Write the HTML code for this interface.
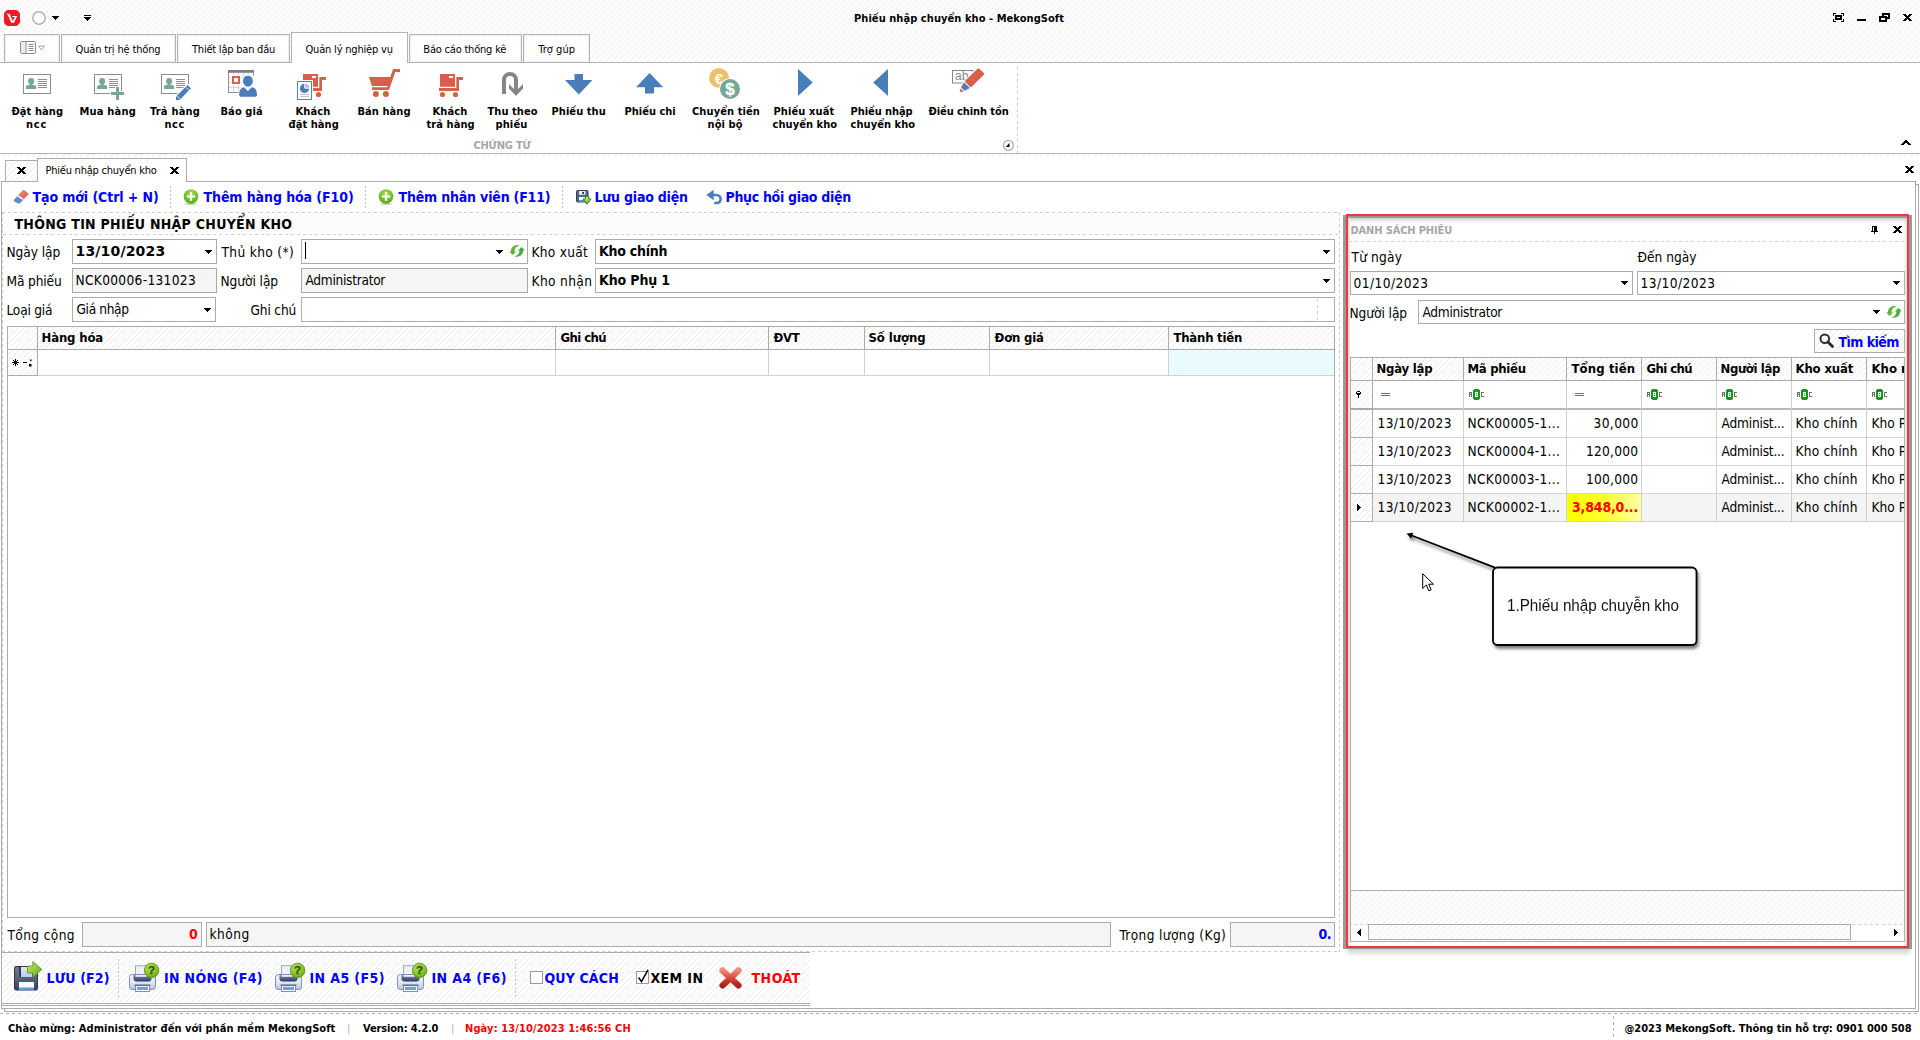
<!DOCTYPE html>
<html lang="vi"><head><meta charset="utf-8"><title>Phiếu nhập chuyển kho - MekongSoft</title>
<style>
html,body{margin:0;padding:0;background:#fff}
body{width:1920px;height:1040px;position:relative;overflow:hidden;font-family:"DejaVu Sans Condensed","Liberation Sans",sans-serif;font-size:13.6px;color:#000}
div,span,svg{position:absolute;box-sizing:border-box}
.h{background-color:#fff}
.t{white-space:nowrap;line-height:20px;height:20px}
.b{font-weight:700}
.f{border:1px solid #ababab;background:#fff}
.g{background:#f5f5f5}
.ln{background:#ababab}
.dh{height:0;border-top:1px dashed #d4d4d4}
.dv{width:0;border-left:1px dashed #d4d4d4}
.ar{width:0;height:0;border-left:4px solid transparent;border-right:4px solid transparent;border-top:4px solid #000}
</style></head>
<body>
<svg width="0" height="0" style="left:0;top:0"><defs><pattern id="hp" width="6" height="6" patternUnits="userSpaceOnUse"><path d="M4 0h1v1h-1zM3 1h1v1h-1zM2 2h1v1h-1zM1 3h1v1h-1zM0 4h1v1h-1zM5 5h1v1h-1z" fill="#ebebeb"/></pattern><pattern id="hq" width="6" height="6" patternUnits="userSpaceOnUse"><path d="M4 0h1v1h-1zM3 1h1v1h-1zM2 2h1v1h-1zM1 3h1v1h-1zM0 4h1v1h-1zM5 5h1v1h-1z" fill="#f5f5f5"/></pattern></defs></svg>
<div style="left:0px;top:0px;width:1920px;height:32px;background:#fff;"></div>
<svg style="left:0px;top:0px" width="1920" height="32" shape-rendering="crispEdges"><rect width="100%" height="100%" fill="url(#hp)"/></svg>
<div style="left:0px;top:32px;width:1920px;height:30px;background:#fff;"></div>
<svg style="left:0px;top:32px" width="1920" height="30" shape-rendering="crispEdges"><rect width="100%" height="100%" fill="url(#hp)"/></svg>
<svg style="left:4px;top:10px" width="16" height="16" viewBox="0 0 16 16"><path d="M4 0 H12 Q13 0 13.800 0.800 L15.200 2.200 Q16 3 16 4 V12 Q16 13 15.200 13.800 L13.800 15.200 Q13 16 12 16 H4 Q3 16 2.200 15.200 L0.800 13.800 Q0 13 0 12 V4 Q0 3 0.800 2.200 L2.200 0.800 Q3 0 4 0 Z" fill="#ed1c24"/><path d="M2.300 2.500 L4.400 4.600 L5.300 3.200 L8.700 11 L10.900 7 L8.200 6.900 L8.300 6 L13.200 6 L10 12.800 L7.300 12.800 L4.200 6 Z" fill="#fff"/></svg>
<svg style="left:31px;top:10px" width="16" height="16" viewBox="0 0 16 16"><circle cx="8" cy="8" r="6.200" fill="#fff" stroke="#b4b4b4" stroke-width="1.500"/></svg>
<svg style="left:52px;top:16px" width="7" height="4" shape-rendering="crispEdges"><path d="M0 0h7v1h-7zM1 1h5v1h-5zM2 2h3v1h-3zM3 3h1v1h-1z"/></svg>
<div style="left:84px;top:15px;width:7px;height:1px;background:#000"></div>
<svg style="left:84px;top:17px" width="7" height="4" shape-rendering="crispEdges"><path d="M0 0h7v1h-7zM1 1h5v1h-5zM2 2h3v1h-3zM3 3h1v1h-1z"/></svg>
<span class="t b" style="top:9px;left:854px;font-size:11px;letter-spacing:0.06px;">Phiếu nhập chuyển kho - MekongSoft</span>
<svg style="left:1833px;top:13px" width="11" height="9" shape-rendering="crispEdges"><path d="M0 0h3v1h-3zM8 0h3v1h-3zM0 1h1v1h-1zM10 1h1v1h-1zM0 2h1v1h-1zM2 2h7v1h-7zM10 2h1v1h-1zM2 3h7v1h-7zM2 4h2v1h-2zM7 4h2v1h-2zM2 5h7v1h-7zM0 6h1v1h-1zM2 6h7v1h-7zM10 6h1v1h-1zM0 7h1v1h-1zM10 7h1v1h-1zM0 8h3v1h-3zM8 8h3v1h-3z" fill="#000"/></svg>
<div style="left:1857px;top:19px;width:9px;height:2px;background:#000"></div>
<svg style="left:1879px;top:13px" width="11" height="9" shape-rendering="crispEdges"><path d="M3 0h8v1h-8zM3 1h8v1h-8zM3 2h2v1h-2zM9 2h2v1h-2zM0 3h8v1h-8zM9 3h2v1h-2zM0 4h11v1h-11zM0 5h2v1h-2zM6 5h5v1h-5zM0 6h2v1h-2zM6 6h2v1h-2zM0 7h8v1h-8zM0 8h8v1h-8z" fill="#000"/></svg>
<svg style="left:1903px;top:14px" width="9" height="7" shape-rendering="crispEdges"><path d="M0 0h3v1h-3zM6 0h3v1h-3zM1 1h3v1h-3zM5 1h3v1h-3zM2 2h5v1h-5zM3 3h3v1h-3zM2 4h5v1h-5zM1 5h3v1h-3zM5 5h3v1h-3zM0 6h3v1h-3zM6 6h3v1h-3z" fill="#000"/></svg>
<div style="left:4px;top:34px;width:56px;height:29px;background:#fff;border:1px solid #b4b4b4;box-shadow:inset 0 0 0 1px #f0f0f0"></div>
<div style="left:61px;top:34px;width:115px;height:29px;background:#fff;border:1px solid #b4b4b4;box-shadow:inset 0 0 0 1px #f0f0f0"></div>
<span class="t" style="top:40px;left:75.5px;font-size:11px;letter-spacing:-0.16px;">Quản trị hệ thống</span>
<div style="left:177px;top:34px;width:113px;height:29px;background:#fff;border:1px solid #b4b4b4;box-shadow:inset 0 0 0 1px #f0f0f0"></div>
<span class="t" style="top:40px;left:192px;font-size:11px;letter-spacing:-0.22px;">Thiết lập ban đầu</span>
<div style="left:409px;top:34px;width:113px;height:29px;background:#fff;border:1px solid #b4b4b4;box-shadow:inset 0 0 0 1px #f0f0f0"></div>
<span class="t" style="top:40px;left:423.3px;font-size:11px;letter-spacing:-0.2px;">Báo cáo thống kê</span>
<div style="left:523px;top:34px;width:67px;height:29px;background:#fff;border:1px solid #b4b4b4;box-shadow:inset 0 0 0 1px #f0f0f0"></div>
<span class="t" style="top:40px;left:538.3px;font-size:11px;letter-spacing:0.03px;">Trợ gúp</span>
<div style="left:291px;top:32px;width:117px;height:32px;background:#fff;border:1px solid #b4b4b4;border-bottom:none"></div>
<span class="t" style="top:40px;left:305.5px;font-size:11px;letter-spacing:-0.19px;">Quản lý nghiệp vụ</span>
<svg style="left:20px;top:41px" width="26" height="14" viewBox="0 0 26 14"><rect x="0.500" y="0.500" width="15" height="12" rx="1.500" fill="#fff" stroke="#8c8c8c"/><rect x="1" y="1" width="4.500" height="11" fill="#ececec"/><path d="M6 0.500 V12.500" stroke="#8c8c8c"/><path d="M8.500 3.500 h5 M8.500 5.500 h5 M8.500 7.500 h5 M8.500 9.500 h5" stroke="#8c8c8c" stroke-width="1"/><path d="M18.500 5 h6 l-3 4 z" fill="#fff" stroke="#9a9a9a" stroke-width="0.900"/></svg>
<div style="left:0px;top:62px;width:1920px;height:92px;background:#fff;border-top:1px solid #b4b4b4;border-bottom:1px solid #b4b4b4"></div>
<div style="left:292px;top:62px;width:115px;height:1px;background:#fff"></div>
<div style="left:0px;top:154px;width:1920px;height:3px;background:#fff;"></div>
<svg style="left:0px;top:154px" width="1920" height="3" shape-rendering="crispEdges"><rect width="100%" height="100%" fill="url(#hp)"/></svg>
<svg style="left:23px;top:74px" width="32" height="32" viewBox="0 0 32 32" ><g transform="translate(0,0)"><rect x="0.500" y="0.500" width="27" height="19" fill="#fff" stroke="#8c8c8c"/><ellipse cx="8.100" cy="7.200" rx="3" ry="3.300" fill="#76a797"/><path d="M3 15 v-2 c0 -1.300 0.800 -2 2.200 -2 h5.800 c1.400 0 2.200 0.700 2.200 2 v2 z" fill="#76a797"/><rect x="6.600" y="9.500" width="3" height="2" fill="#76a797"/><rect x="15" y="5" width="9" height="1" fill="#8f8f8f" shape-rendering="crispEdges"/><rect x="15" y="7" width="9" height="1" fill="#8f8f8f" shape-rendering="crispEdges"/><rect x="15" y="9" width="9" height="1" fill="#8f8f8f" shape-rendering="crispEdges"/><rect x="15" y="11" width="9" height="1" fill="#8f8f8f" shape-rendering="crispEdges"/><rect x="15" y="13" width="9" height="1" fill="#8f8f8f" shape-rendering="crispEdges"/></g></svg>
<span class="t b" style="top:102px;left:11.5px;font-size:11px;letter-spacing:0.07px;">Đặt hàng</span>
<span class="t b" style="top:115px;left:26px;font-size:11px;letter-spacing:0.75px;">ncc</span>
<svg style="left:94px;top:74px" width="32" height="32" viewBox="0 0 32 32" ><rect x="0.500" y="0.500" width="27" height="19" fill="#fff" stroke="#8c8c8c"/><ellipse cx="8.100" cy="7.200" rx="3" ry="3.300" fill="#76a797"/><path d="M3 15 v-2 c0 -1.300 0.800 -2 2.200 -2 h5.800 c1.400 0 2.200 0.700 2.200 2 v2 z" fill="#76a797"/><rect x="6.600" y="9.500" width="3" height="2" fill="#76a797"/><rect x="15" y="5" width="9" height="1" fill="#8f8f8f" shape-rendering="crispEdges"/><rect x="15" y="7" width="9" height="1" fill="#8f8f8f" shape-rendering="crispEdges"/><rect x="15" y="9" width="9" height="1" fill="#8f8f8f" shape-rendering="crispEdges"/><rect x="15" y="11" width="9" height="1" fill="#8f8f8f" shape-rendering="crispEdges"/><rect x="15" y="13" width="9" height="1" fill="#8f8f8f" shape-rendering="crispEdges"/><rect x="16" y="17" width="15" height="5" fill="#fff"/><rect x="21" y="12" width="5" height="15" fill="#fff"/><path d="M22 13 h3 v5 h5 v3 h-5 v5 h-3 v-5 h-5 v-3 h5 z" fill="#76a797" shape-rendering="crispEdges"/></svg>
<span class="t b" style="top:102px;left:79.5px;font-size:11px;letter-spacing:0.21px;">Mua hàng</span>
<svg style="left:161px;top:74px" width="32" height="32" viewBox="0 0 32 32" ><rect x="0.500" y="0.500" width="27" height="19" fill="#fff" stroke="#8c8c8c"/><ellipse cx="8.100" cy="7.200" rx="3" ry="3.300" fill="#76a797"/><path d="M3 15 v-2 c0 -1.300 0.800 -2 2.200 -2 h5.800 c1.400 0 2.200 0.700 2.200 2 v2 z" fill="#76a797"/><rect x="6.600" y="9.500" width="3" height="2" fill="#76a797"/><rect x="15" y="5" width="9" height="1" fill="#8f8f8f" shape-rendering="crispEdges"/><rect x="15" y="7" width="9" height="1" fill="#8f8f8f" shape-rendering="crispEdges"/><rect x="15" y="9" width="9" height="1" fill="#8f8f8f" shape-rendering="crispEdges"/><rect x="15" y="11" width="9" height="1" fill="#8f8f8f" shape-rendering="crispEdges"/><rect x="15" y="13" width="9" height="1" fill="#8f8f8f" shape-rendering="crispEdges"/><rect x="26.800" y="10.300" width="1.500" height="10" fill="#fff"/><rect x="17" y="18.800" width="11.300" height="1.500" fill="#fff"/><path d="M15 26 L15 22.500 L26.500 11 L30 14.200 L18.700 26 Z" fill="#fff" stroke="#fff" stroke-width="2.400" stroke-linejoin="round"/><path d="M15 26 L15 22.500 L26.500 11 L30 14.200 L18.700 26 Z" fill="#4a7ebb"/><path d="M24.500 13 L28 16.300" stroke="#fff" stroke-width="0.800"/><path d="M15.700 21.900 L19.200 25.300" stroke="#fff" stroke-width="0.800"/></svg>
<span class="t b" style="top:102px;left:150px;font-size:11px;letter-spacing:0.21px;">Trả hàng</span>
<span class="t b" style="top:115px;left:164.5px;font-size:11px;letter-spacing:0.5px;">ncc</span>
<svg style="left:228px;top:70px" width="32" height="32" viewBox="0 0 32 32" ><rect x="0.500" y="1.500" width="25" height="21" fill="#fff" stroke="#8f8f8f"/><rect x="0" y="0" width="26" height="2.800" fill="#7f7f7f"/><rect x="5" y="3" width="1" height="19" fill="#d6d6d6" shape-rendering="crispEdges"/><rect x="10" y="3" width="1" height="19" fill="#d6d6d6" shape-rendering="crispEdges"/><rect x="15" y="3" width="1" height="19" fill="#d6d6d6" shape-rendering="crispEdges"/><rect x="20" y="3" width="1" height="19" fill="#d6d6d6" shape-rendering="crispEdges"/><rect x="1" y="7" width="24" height="1" fill="#d6d6d6" shape-rendering="crispEdges"/><rect x="1" y="12" width="24" height="1" fill="#d6d6d6" shape-rendering="crispEdges"/><rect x="1" y="17" width="24" height="1" fill="#d6d6d6" shape-rendering="crispEdges"/><rect x="3" y="5" width="10" height="10" fill="#fff"/><rect x="5" y="7" width="6" height="6" fill="#fff" stroke="#d8604a" stroke-width="2"/><rect x="24.800" y="5.800" width="1.500" height="17.500" fill="#fff"/><rect x="11" y="21.800" width="15.300" height="1.500" fill="#fff"/><ellipse cx="19.900" cy="11.200" rx="4.900" ry="5.500" fill="#fff" stroke="#fff" stroke-width="2.400"/><path d="M11.200 25 C11.200 20 13 17.500 16 17.200 L19.900 21 L23.800 17.200 C27 17.500 29 20 29 25 C29 26.200 28.200 26.800 27 26.800 H13.200 C12 26.800 11.200 26.200 11.200 25 Z" fill="#fff" stroke="#fff" stroke-width="2.400"/><path d="M15 11 C15 7.500 17 5.700 19.900 5.700 S24.800 7.500 24.800 11 C24.800 14 22.500 16.700 19.900 16.700 S15 14 15 11 Z" fill="#4a7ebb"/><path d="M11.200 25 C11.200 20 13 17.500 16 17.200 L19.900 21 L23.800 17.200 C27 17.500 29 20 29 25 C29 26.200 28.200 26.800 27 26.800 H13.200 C12 26.800 11.200 26.200 11.200 25 Z" fill="#4a7ebb"/></svg>
<span class="t b" style="top:102px;left:220.5px;font-size:11px;letter-spacing:0.08px;">Báo giá</span>
<svg style="left:296px;top:73px" width="32" height="32" viewBox="0 0 32 32" ><g transform="translate(6,1)"><rect x="1" y="0" width="15" height="12.800" fill="#d8604a"/><rect x="10" y="2" width="4" height="2" fill="#fff"/><path d="M0 14 H17.300 V3.100 H24 V6 H20 V17 H0 Z" fill="#d8604a"/><circle cx="3.500" cy="20.500" r="2.600" fill="#d8604a"/><circle cx="16.500" cy="20.500" r="2.600" fill="#d8604a"/></g><rect x="0" y="7" width="17" height="21" fill="#fff"/><rect x="1.500" y="8.500" width="14" height="18" fill="#fff" stroke="#4a86c5" stroke-width="1"/><circle cx="8.500" cy="15.400" r="4.600" fill="#4a7ebb"/><path d="M8.500 15.400 V10.800 A4.600 4.600 0 0 1 13.100 15.400 Z" fill="#9dbbe0"/><path d="M8.800 10.500 V15.100 H13.400" stroke="#fff" stroke-width="1" fill="none"/><rect x="4" y="21" width="9" height="1" fill="#c4c4c4" shape-rendering="crispEdges"/><rect x="4" y="23" width="9" height="1" fill="#c4c4c4" shape-rendering="crispEdges"/></svg>
<span class="t b" style="top:102px;left:295.5px;font-size:11px;letter-spacing:0.12px;">Khách</span>
<span class="t b" style="top:115px;left:288.5px;font-size:11px;letter-spacing:0.07px;">đặt hàng</span>
<svg style="left:369px;top:69px" width="32" height="32" viewBox="0 0 32 32" ><path d="M0 8.100 L21.300 8.100 L24.100 0 L31 0 L31 2.900 L26.300 2.900 L20 20.900 L3 20.900 L3 18.200 L18.200 18.200 L18.600 17 L2.900 17 Z" fill="#d8604a"/><circle cx="6.900" cy="25" r="3" fill="#d8604a"/><circle cx="16.900" cy="25" r="3" fill="#d8604a"/></svg>
<span class="t b" style="top:102px;left:357.5px;font-size:11px;letter-spacing:0.07px;">Bán hàng</span>
<svg style="left:439px;top:73px" width="32" height="32" viewBox="0 0 32 32" ><g transform="translate(0,1)"><rect x="1" y="0" width="15" height="12.800" fill="#d8604a"/><rect x="10" y="2" width="4" height="2" fill="#fff"/><path d="M0 14 H17.300 V3.100 H24 V6 H20 V17 H0 Z" fill="#d8604a"/><circle cx="3.500" cy="20.500" r="2.600" fill="#d8604a"/><circle cx="16.500" cy="20.500" r="2.600" fill="#d8604a"/></g></svg>
<span class="t b" style="top:102px;left:432.5px;font-size:11px;letter-spacing:0.12px;">Khách</span>
<span class="t b" style="top:115px;left:426.5px;font-size:11px;letter-spacing:0.07px;">trả hàng</span>
<svg style="left:500px;top:70px" width="32" height="32" viewBox="0 0 32 32" ><path d="M4 24 V10 A6 6 0 0 1 16 10 V20" fill="none" stroke="#858585" stroke-width="4"/><path d="M9 14 L14 19 H18 L23 14 V18.500 L16 26 L9 18.500 Z" fill="#858585"/></svg>
<span class="t b" style="top:102px;left:487.5px;font-size:11px;letter-spacing:0.07px;">Thu theo</span>
<span class="t b" style="top:115px;left:495.5px;font-size:11px;letter-spacing:0.12px;">phiếu</span>
<svg style="left:565px;top:74px" width="28" height="21" viewBox="0 0 28 21" ><path d="M9.500 0 h8.500 v6 h9.500 l-13.700 14.500 l-13.800 -14.500 h9.500 z" fill="#4a7ebb"/></svg>
<span class="t b" style="top:102px;left:551.5px;font-size:11px;letter-spacing:0.06px;">Phiếu thu</span>
<svg style="left:636px;top:73.4px" width="28" height="21" viewBox="0 0 28 21" ><path d="M13.600 0 l13.600 14.300 h-9.200 v6.300 h-9 v-6.300 h-9 z" fill="#4a7ebb"/></svg>
<span class="t b" style="top:102px;left:624.5px;font-size:11px;">Phiếu chi</span>
<svg style="left:709px;top:68px" width="32" height="32" viewBox="0 0 32 32" ><circle cx="10" cy="10" r="10" fill="#ecc16b"/><text x="9.800" y="15.500" text-anchor="middle" font-family="Liberation Sans,sans-serif" font-weight="700" font-size="15" fill="#fff">€</text><circle cx="21" cy="21" r="10.800" fill="#fff"/><circle cx="21" cy="21" r="10" fill="#76a797"/><text x="21" y="27" text-anchor="middle" font-family="Liberation Sans,sans-serif" font-weight="700" font-size="17" fill="#fff" stroke="#fff" stroke-width="0.300">$</text></svg>
<span class="t b" style="top:102px;left:692px;font-size:11px;letter-spacing:0.1px;">Chuyển tiền</span>
<span class="t b" style="top:115px;left:707.5px;font-size:11px;letter-spacing:0.1px;">nội bộ</span>
<svg style="left:798px;top:69px" width="16" height="28" viewBox="0 0 16 28" ><path d="M0 0 L14.800 13.500 L0 27 Z" fill="#4a7ebb"/></svg>
<span class="t b" style="top:102px;left:773.5px;font-size:11px;letter-spacing:0.11px;">Phiếu xuất</span>
<span class="t b" style="top:115px;left:772.5px;font-size:11px;letter-spacing:0.06px;">chuyển kho</span>
<svg style="left:873px;top:69px" width="16" height="28" viewBox="0 0 16 28" ><path d="M15 0 L0.200 13.500 L15 27 Z" fill="#4a7ebb"/></svg>
<span class="t b" style="top:102px;left:850.5px;font-size:11px;letter-spacing:-0.06px;">Phiếu nhập</span>
<span class="t b" style="top:115px;left:850.5px;font-size:11px;letter-spacing:0.06px;">chuyển kho</span>
<svg style="left:952px;top:68px" width="34" height="28" viewBox="0 0 34 28" ><rect x="0.500" y="2.500" width="20.500" height="12.500" fill="#fff" stroke="#858585"/><text x="2.800" y="12" font-family="Liberation Sans,sans-serif" font-size="12.500" fill="#8c8c8c">ab</text><path d="M26.300 0.300 L32 5.700 L18.800 19 L12 24.500 L7.500 24.500 L7.500 20 L13 13 Z" fill="#fff" stroke="#fff" stroke-width="2" stroke-linejoin="round"/><path d="M26.400 1.500 L31 5.900 L18.800 17.900 L14.200 13.300 Z" fill="#d8604a" stroke="#d8604a" stroke-width="2.400" stroke-linejoin="round"/><path d="M11.800 14.300 L18 20 L12.700 22.800 L9 19.800 Z" fill="#4a7ebb"/><path d="M8 20.500 L12 23.600 L8.600 24 C8 23.800 7.800 23.400 7.800 23 Z" fill="#d8604a"/></svg>
<span class="t b" style="top:102px;left:928.5px;font-size:11px;letter-spacing:-0.08px;">Điều chinh tồn</span>
<span class="t b" style="top:136px;left:473.5px;font-size:11px;color:#a6a6a6;letter-spacing:-0.21px;">CHỨNG TỪ</span>
<div style="left:1017px;top:67px;width:1px;height:86px;background:repeating-linear-gradient(180deg,#cfcfcf 0,#cfcfcf 3px,rgba(0,0,0,0) 3px,rgba(0,0,0,0) 6px) 0 0px"></div>
<svg style="left:1003px;top:140px" width="12" height="12" viewBox="0 0 12 12"><circle cx="5.400" cy="5.400" r="4.900" fill="#fff" stroke="#a8a8a8" stroke-width="1.200"/><path d="M6.500 3 V7 H2.600 Z" fill="#000"/></svg>
<svg style="left:1901px;top:140px" width="10" height="5" shape-rendering="crispEdges"><path d="M4 0h2v1h-2zM3 1h4v1h-4zM2 2h6v1h-6zM1 3h3v1h-3zM6 3h3v1h-3zM0 4h3v1h-3zM7 4h3v1h-3z" fill="#000"/></svg>
<div style="left:5px;top:160px;width:33px;height:22px;background:#fff;border:1px solid #ababab;"></div>
<svg style="left:6px;top:161px" width="31" height="20" shape-rendering="crispEdges"><rect width="100%" height="100%" fill="url(#hp)"/></svg>
<svg style="left:17px;top:167px" width="9" height="7" shape-rendering="crispEdges"><path d="M0 0h3v1h-3zM6 0h3v1h-3zM1 1h3v1h-3zM5 1h3v1h-3zM2 2h5v1h-5zM3 3h3v1h-3zM2 4h5v1h-5zM1 5h3v1h-3zM5 5h3v1h-3zM0 6h3v1h-3zM6 6h3v1h-3z" fill="#000"/></svg>
<div style="left:4px;top:184px;width:1915px;height:828px;border:1px solid #ababab;border-top:none;border-left:none"></div>
<div style="left:1px;top:181px;width:1915px;height:828px;background:#fff;border:1px solid #ababab"></div>
<div style="left:1916px;top:184px;width:3px;height:1px;background:#ababab"></div>
<div style="left:4px;top:1009px;width:1px;height:3px;background:#ababab"></div>
<div style="left:37px;top:158px;width:150px;height:24px;background:#fff;border:1px solid #ababab;border-bottom:none"></div>
<span class="t" style="top:161px;left:45.5px;font-size:11px;letter-spacing:-0.23px;">Phiếu nhập chuyển kho</span>
<svg style="left:170px;top:167px" width="9" height="7" shape-rendering="crispEdges"><path d="M0 0h3v1h-3zM6 0h3v1h-3zM1 1h3v1h-3zM5 1h3v1h-3zM2 2h5v1h-5zM3 3h3v1h-3zM2 4h5v1h-5zM1 5h3v1h-3zM5 5h3v1h-3zM0 6h3v1h-3zM6 6h3v1h-3z" fill="#000"/></svg>
<svg style="left:1905px;top:166px" width="9" height="7" shape-rendering="crispEdges"><path d="M0 0h3v1h-3zM6 0h3v1h-3zM1 1h3v1h-3zM5 1h3v1h-3zM2 2h5v1h-5zM3 3h3v1h-3zM2 4h5v1h-5zM1 5h3v1h-3zM5 5h3v1h-3zM0 6h3v1h-3zM6 6h3v1h-3z" fill="#000"/></svg>
<svg style="left:13px;top:189px" width="16" height="16" viewBox="0 0 16 16" ><defs><linearGradient id="er1" x1="0" y1="0" x2="1" y2="1"><stop offset="0" stop-color="#f4a08c"/><stop offset="1" stop-color="#d8452e"/></linearGradient></defs><path d="M1 11 L9.500 1.500 C10 1 10.800 1 11.300 1.300 L15 4 C15.500 4.500 15.500 5.200 15 5.800 L7 14 C6.500 14.500 5.800 14.500 5.300 14.200 L1.200 12.300 C0.800 12 0.700 11.500 1 11 Z" fill="url(#er1)" stroke="#b8b8c8" stroke-width="0.6"/><path d="M1 11 L4.200 7.400 L9.800 10.900 L7 14 C6.500 14.500 5.800 14.500 5.300 14.200 L1.200 12.300 C0.800 12 0.700 11.500 1 11 Z" fill="#5a8fd6"/><path d="M4.200 7.400 L5.200 6.300 L10.800 9.800 L9.800 10.900 Z" fill="#f2f2f2"/></svg>
<span class="t b" style="top:187px;left:32.5px;font-size:14px;color:#0000ff;letter-spacing:-0.09px;">Tạo mới (Ctrl + N)</span>
<div style="left:170px;top:186px;width:1px;height:22px;background:repeating-linear-gradient(180deg,#c4c4c4 0,#c4c4c4 2px,rgba(0,0,0,0) 2px,rgba(0,0,0,0) 4px) 0 0px"></div>
<svg style="left:183px;top:189px" width="16" height="16" viewBox="0 0 16 16" ><defs><radialGradient id="pga" cx="0.5" cy="0.3" r="0.7"><stop offset="0" stop-color="#a6e04e"/><stop offset="1" stop-color="#4fae12"/></radialGradient></defs><ellipse cx="8" cy="15" rx="6" ry="1" fill="#cfcfcf"/><circle cx="8" cy="7.500" r="7.300" fill="url(#pga)"/><path d="M6.900 3.300 h2.200 v3.100 h3.100 v2.200 h-3.100 v3.100 h-2.200 v-3.100 h-3.100 v-2.200 h3.100 z" fill="#fff"/></svg>
<span class="t b" style="top:187px;left:203.5px;font-size:14px;color:#0000ff;letter-spacing:-0.08px;">Thêm hàng hóa (F10)</span>
<div style="left:365px;top:186px;width:1px;height:22px;background:repeating-linear-gradient(180deg,#c4c4c4 0,#c4c4c4 2px,rgba(0,0,0,0) 2px,rgba(0,0,0,0) 4px) 0 0px"></div>
<svg style="left:378px;top:189px" width="16" height="16" viewBox="0 0 16 16" ><defs><radialGradient id="pgb" cx="0.5" cy="0.3" r="0.7"><stop offset="0" stop-color="#a6e04e"/><stop offset="1" stop-color="#4fae12"/></radialGradient></defs><ellipse cx="8" cy="15" rx="6" ry="1" fill="#cfcfcf"/><circle cx="8" cy="7.500" r="7.300" fill="url(#pgb)"/><path d="M6.900 3.300 h2.200 v3.100 h3.100 v2.200 h-3.100 v3.100 h-2.200 v-3.100 h-3.100 v-2.200 h3.100 z" fill="#fff"/></svg>
<span class="t b" style="top:187px;left:398.5px;font-size:14px;color:#0000ff;letter-spacing:-0.18px;">Thêm nhân viên (F11)</span>
<div style="left:562px;top:186px;width:1px;height:22px;background:repeating-linear-gradient(180deg,#c4c4c4 0,#c4c4c4 2px,rgba(0,0,0,0) 2px,rgba(0,0,0,0) 4px) 0 0px"></div>
<svg style="left:576px;top:190px" width="17" height="16" viewBox="0 0 17 16" ><defs><linearGradient id="sl1" x1="0" y1="0" x2="0" y2="1"><stop offset="0" stop-color="#d8f59a"/><stop offset="1" stop-color="#5fae17"/></linearGradient></defs><rect x="0.500" y="0.500" width="11.500" height="11.500" rx="1" fill="#55628a" stroke="#333f62" stroke-width="1"/><rect x="3" y="1" width="6.500" height="3.800" fill="#e2ebf7"/><rect x="6.300" y="2.100" width="1.700" height="1.700" fill="#10131c"/><rect x="3" y="7" width="6.500" height="5" fill="#fdfdfe"/><rect x="3" y="10" width="6.500" height="2" fill="#4a92da"/><path d="M9.300 6.400 h3.400 v2.600 h2.300 L11 14.300 L7 9 h2.300 z" fill="url(#sl1)" stroke="#3d7d0e" stroke-width="1" stroke-linejoin="round"/></svg>
<span class="t b" style="top:187px;left:594.5px;font-size:14px;color:#0000ff;letter-spacing:-0.21px;">Lưu giao diện</span>
<svg style="left:706px;top:189px" width="17" height="17" viewBox="0 0 17 17" ><path d="M0.300 6 L7.700 0.800 V11.200 Z" fill="#4a7fc0"/><path d="M6.500 6 H10.300 C13 6 14.600 7.800 14.600 10 C14.600 12.300 13 14 10.300 14 H8.200" fill="none" stroke="#4a7fc0" stroke-width="2.600"/></svg>
<span class="t b" style="top:187px;left:725.5px;font-size:14px;color:#0000ff;letter-spacing:-0.32px;">Phục hồi giao diện</span>
<div style="left:2px;top:212px;width:1338px;height:1px;background:repeating-linear-gradient(90deg,#cacaca 0,#cacaca 3px,rgba(0,0,0,0) 3px,rgba(0,0,0,0) 6px) 0px 0"></div>
<div style="left:2px;top:951px;width:1338px;height:1px;background:repeating-linear-gradient(90deg,#cacaca 0,#cacaca 3px,rgba(0,0,0,0) 3px,rgba(0,0,0,0) 6px) 0px 0"></div>
<div style="left:2px;top:212px;width:1px;height:740px;background:repeating-linear-gradient(180deg,#cacaca 0,#cacaca 3px,rgba(0,0,0,0) 3px,rgba(0,0,0,0) 6px) 0 0px"></div>
<div style="left:1339px;top:212px;width:1px;height:740px;background:repeating-linear-gradient(180deg,#cacaca 0,#cacaca 3px,rgba(0,0,0,0) 3px,rgba(0,0,0,0) 6px) 0 0px"></div>
<div style="left:3px;top:213px;width:1336px;height:21px;background:#fff;"></div>
<svg style="left:3px;top:213px" width="1336" height="21" shape-rendering="crispEdges"><rect width="100%" height="100%" fill="url(#hq)"/></svg>
<div style="left:3px;top:234px;width:1336px;height:1px;background:repeating-linear-gradient(90deg,#d0d0d0 0,#d0d0d0 3px,rgba(0,0,0,0) 3px,rgba(0,0,0,0) 6px) 0px 0"></div>
<span class="t b" style="top:214px;left:14.5px;font-size:14px;letter-spacing:0.28px;">THÔNG TIN PHIẾU NHẬP CHUYỂN KHO</span>
<span class="t" style="top:242px;left:6.5px;letter-spacing:-0.07px;">Ngày lập</span>
<div class="f" style="left:72px;top:239px;width:145px;height:25px;"></div>
<span class="t b" style="top:241px;left:75.5px;font-size:14px;font-family:'DejaVu Sans','Liberation Sans',sans-serif;letter-spacing:0.17px;">13/10/2023</span>
<svg style="left:205px;top:250px" width="7" height="4" shape-rendering="crispEdges"><path d="M0 0h7v1h-7zM1 1h5v1h-5zM2 2h3v1h-3zM3 3h1v1h-1z"/></svg>
<span class="t" style="top:242px;left:221.5px;letter-spacing:0.35px;">Thủ kho (*)</span>
<div class="f" style="left:301px;top:239px;width:227px;height:25px;"></div>
<div style="left:305px;top:242px;width:1px;height:17px;background:#000"></div>
<svg style="left:496px;top:250px" width="7" height="4" shape-rendering="crispEdges"><path d="M0 0h7v1h-7zM1 1h5v1h-5zM2 2h3v1h-3zM3 3h1v1h-1z"/></svg>
<svg style="left:509px;top:243px" width="16" height="16" viewBox="0 0 16 16" ><path d="M10.600 2.300 C6 1.200 1.900 3.500 1.900 8.500 L0.100 8.500 L3.600 11.900 L7.100 8.400 L5.500 8.400 C5.500 5.500 7.500 3.200 10.600 2.300 Z" fill="#5db53a"/><path d="M10.600 2.300 C6 1.200 1.900 3.500 1.900 8.500 L0.100 8.500 L3.600 11.900 L7.100 8.400 L5.500 8.400 C5.500 5.500 7.500 3.200 10.600 2.300 Z" fill="#45b13c" transform="rotate(180 8 7.900)"/></svg>
<span class="t" style="top:242px;left:531.5px;letter-spacing:0.27px;">Kho xuất</span>
<div class="f" style="left:595px;top:239px;width:740px;height:25px;"></div>
<span class="t b" style="top:241px;left:599px;font-size:14px;letter-spacing:-0.25px;">Kho chính</span>
<svg style="left:1323px;top:250px" width="7" height="4" shape-rendering="crispEdges"><path d="M0 0h7v1h-7zM1 1h5v1h-5zM2 2h3v1h-3zM3 3h1v1h-1z"/></svg>
<span class="t" style="top:271px;left:6.5px;letter-spacing:-0.14px;">Mã phiếu</span>
<div class="f g" style="left:72px;top:268px;width:145px;height:25px;"></div>
<span class="t" style="top:270px;left:75.5px;letter-spacing:0.32px;">NCK00006-131023</span>
<span class="t" style="top:271px;left:220.5px;letter-spacing:-0.06px;">Người lập</span>
<div class="f g" style="left:301px;top:268px;width:227px;height:25px;"></div>
<span class="t" style="top:270px;left:305.5px;letter-spacing:-0.29px;">Administrator</span>
<span class="t" style="top:271px;left:531.5px;letter-spacing:0.36px;">Kho nhận</span>
<div class="f" style="left:595px;top:268px;width:740px;height:25px;"></div>
<span class="t b" style="top:270px;left:599px;font-size:14px;letter-spacing:-0.12px;">Kho Phụ 1</span>
<svg style="left:1323px;top:279px" width="7" height="4" shape-rendering="crispEdges"><path d="M0 0h7v1h-7zM1 1h5v1h-5zM2 2h3v1h-3zM3 3h1v1h-1z"/></svg>
<span class="t" style="top:300px;left:6.5px;letter-spacing:-0.21px;">Loại giá</span>
<div class="f" style="left:72px;top:297px;width:144px;height:25px;"></div>
<span class="t" style="top:299px;left:76.5px;letter-spacing:-0.36px;">Giá nhập</span>
<svg style="left:204px;top:308px" width="7" height="4" shape-rendering="crispEdges"><path d="M0 0h7v1h-7zM1 1h5v1h-5zM2 2h3v1h-3zM3 3h1v1h-1z"/></svg>
<span class="t" style="top:300px;left:250.5px;letter-spacing:-0.17px;">Ghi chú</span>
<div class="f" style="left:301px;top:297px;width:1034px;height:25px;"></div>
<div style="left:1317px;top:299px;width:1px;height:21px;background:repeating-linear-gradient(180deg,#d0d0d0 0,#d0d0d0 3px,rgba(0,0,0,0) 3px,rgba(0,0,0,0) 6px) 0 0px"></div>
<div style="left:7px;top:326px;width:1328px;height:592px;background:#fff;border:1px solid #ababab"></div>
<div style="left:8px;top:327px;width:1326px;height:22px;background:#fff"></div>
<svg style="left:8px;top:327px" width="29" height="22" shape-rendering="crispEdges"><rect width="100%" height="100%" fill="url(#hp)"/></svg>
<svg style="left:38px;top:327px" width="517" height="22" shape-rendering="crispEdges"><rect width="100%" height="100%" fill="url(#hp)"/></svg>
<svg style="left:556px;top:327px" width="212" height="22" shape-rendering="crispEdges"><rect width="100%" height="100%" fill="url(#hp)"/></svg>
<svg style="left:769px;top:327px" width="95" height="22" shape-rendering="crispEdges"><rect width="100%" height="100%" fill="url(#hp)"/></svg>
<svg style="left:865px;top:327px" width="124" height="22" shape-rendering="crispEdges"><rect width="100%" height="100%" fill="url(#hp)"/></svg>
<svg style="left:990px;top:327px" width="178" height="22" shape-rendering="crispEdges"><rect width="100%" height="100%" fill="url(#hp)"/></svg>
<svg style="left:1169px;top:327px" width="165" height="22" shape-rendering="crispEdges"><rect width="100%" height="100%" fill="url(#hp)"/></svg>
<div style="left:8px;top:349px;width:1326px;height:1px;background:#ababab"></div>
<div style="left:8px;top:350px;width:29px;height:25px;background:#fff;"></div>
<svg style="left:8px;top:350px" width="29" height="25" shape-rendering="crispEdges"><rect width="100%" height="100%" fill="url(#hp)"/></svg>
<div style="left:1169px;top:350px;width:165px;height:25px;background:#e9fbff"></div>
<div style="left:37px;top:327px;width:1px;height:22px;background:#ababab"></div>
<div style="left:37px;top:350px;width:1px;height:25px;background:#ababab"></div>
<div style="left:555px;top:327px;width:1px;height:22px;background:#ababab"></div>
<div style="left:555px;top:350px;width:1px;height:25px;background:#d0d0d0"></div>
<div style="left:768px;top:327px;width:1px;height:22px;background:#ababab"></div>
<div style="left:768px;top:350px;width:1px;height:25px;background:#d0d0d0"></div>
<div style="left:864px;top:327px;width:1px;height:22px;background:#ababab"></div>
<div style="left:864px;top:350px;width:1px;height:25px;background:#d0d0d0"></div>
<div style="left:989px;top:327px;width:1px;height:22px;background:#ababab"></div>
<div style="left:989px;top:350px;width:1px;height:25px;background:#d0d0d0"></div>
<div style="left:1168px;top:327px;width:1px;height:22px;background:#ababab"></div>
<div style="left:1168px;top:350px;width:1px;height:25px;background:#d0d0d0"></div>
<span class="t b" style="top:328px;left:41.5px;font-size:13px;letter-spacing:-0.14px;">Hàng hóa</span>
<span class="t b" style="top:328px;left:560.5px;font-size:13px;letter-spacing:-0.58px;">Ghi chú</span>
<span class="t b" style="top:328px;left:773.5px;font-size:13px;letter-spacing:-0.25px;">ĐVT</span>
<span class="t b" style="top:328px;left:868.5px;font-size:13px;letter-spacing:-0.07px;">Số lượng</span>
<span class="t b" style="top:328px;left:994.5px;font-size:13px;letter-spacing:-0.17px;">Đơn giá</span>
<span class="t b" style="top:328px;left:1173.5px;font-size:13px;letter-spacing:-0.22px;">Thành tiền</span>
<div style="left:8px;top:375px;width:30px;height:1px;background:#ababab"></div>
<div style="left:38px;top:375px;width:1296px;height:1px;background:#d2d2d2"></div>
<svg style="left:12px;top:358px" width="21" height="10" viewBox="0 0 21 10"><path d="M3.500 1 V8 M0 4.500 H7 M1 2 L6 7 M6 2 L1 7" stroke="#000" stroke-width="1" fill="none"/><rect x="11" y="4" width="4" height="1" fill="#000"/><rect x="18" y="1.500" width="1.500" height="1.500" fill="#000"/><rect x="17" y="6" width="2.500" height="2.500" fill="#000"/></svg>
<span class="t" style="top:925px;left:7.5px;letter-spacing:0.38px;">Tổng cộng</span>
<div class="f g" style="left:82px;top:922px;width:120px;height:25px;"></div>
<span class="t b" style="top:924px;left:189px;font-size:14px;color:#ff0000;letter-spacing:-0.5px;">0</span>
<div class="f g" style="left:206px;top:922px;width:905px;height:25px;"></div>
<span class="t" style="top:924px;left:209.5px;letter-spacing:0.5px;">không</span>
<span class="t" style="top:925px;left:1119.5px;letter-spacing:0.37px;">Trọng lượng (Kg)</span>
<div class="f g" style="left:1230px;top:922px;width:105px;height:25px;"></div>
<span class="t b" style="top:924px;left:1318.5px;font-size:14px;color:#0000ff;letter-spacing:-0.5px;">0.</span>
<div style="left:2px;top:952px;width:808px;height:1px;background:#ababab"></div>
<div style="left:2px;top:953px;width:808px;height:50px;background:#fff;"></div>
<svg style="left:2px;top:953px" width="808" height="50" shape-rendering="crispEdges"><rect width="100%" height="100%" fill="url(#hp)"/></svg>
<div style="left:2px;top:1003px;width:808px;height:1px;background:#ababab"></div>
<div style="left:2px;top:1005px;width:808px;height:1px;background:#ababab"></div>
<svg style="left:14px;top:961px" width="29" height="30" viewBox="0 0 29 30" ><defs><linearGradient id="fl1" x1="0" y1="0" x2="0" y2="1"><stop offset="0" stop-color="#6f7b96"/><stop offset="1" stop-color="#3c445a"/></linearGradient><linearGradient id="fl2" x1="0" y1="0" x2="1" y2="1"><stop offset="0" stop-color="#c9f06a"/><stop offset="1" stop-color="#5ea21a"/></linearGradient><linearGradient id="fl3" x1="0" y1="0" x2="0" y2="1"><stop offset="0" stop-color="#dfe9f5"/><stop offset="1" stop-color="#b9cce6"/></linearGradient></defs><rect x="0.500" y="5.500" width="23" height="23.500" rx="1.500" fill="url(#fl1)" stroke="#2f3548" stroke-width="1"/><rect x="4.500" y="6" width="13.500" height="10" fill="url(#fl3)"/><rect x="4.500" y="6" width="2.500" height="10" fill="#343b50"/><rect x="5" y="21" width="15" height="8" fill="#fff"/><rect x="5" y="26.500" width="15" height="2.500" fill="#4f9fe0"/><path d="M13.500 5 h5.300 v-4.500 l9.200 8 l-9.200 8 v-4.500 h-5.300 z" fill="url(#fl2)" stroke="#5a8a1a" stroke-width="0.800"/></svg>
<span class="t b" style="top:968px;left:46.5px;font-size:14px;color:#0000ff;letter-spacing:0.14px;">LƯU (F2)</span>
<div style="left:118px;top:959px;width:1px;height:38px;background:repeating-linear-gradient(180deg,#c8c8c8 0,#c8c8c8 2px,rgba(0,0,0,0) 2px,rgba(0,0,0,0) 4px) 0 0px"></div>
<svg style="left:129px;top:962px" width="31" height="31" viewBox="0 0 31 31" ><defs><linearGradient id="pr1a" x1="0" y1="0" x2="0" y2="1"><stop offset="0" stop-color="#f4f7fc"/><stop offset="0.55" stop-color="#dfe6f3"/><stop offset="1" stop-color="#b4c2de"/></linearGradient><linearGradient id="pr3a" x1="0" y1="0" x2="0" y2="1"><stop offset="0" stop-color="#7b87ab"/><stop offset="1" stop-color="#2f3a62"/></linearGradient><radialGradient id="pr2a" cx="0.4" cy="0.3" r="0.8"><stop offset="0" stop-color="#b9e356"/><stop offset="0.7" stop-color="#7cba26"/><stop offset="1" stop-color="#4f8c12"/></radialGradient></defs><rect x="6.500" y="3.700" width="11" height="11" fill="#eef1f8" stroke="#9aa8cc" stroke-width="1"/><rect x="0.500" y="12.500" width="26" height="15" rx="2.800" fill="url(#pr1a)" stroke="#7f8fbc" stroke-width="1"/><path d="M4.500 13 h18 v3.500 c0 1.800 -1.200 3 -3 3 h-12 c-1.800 0 -3 -1.200 -3 -3 z" fill="url(#pr3a)"/><rect x="6.500" y="13" width="11" height="1.800" fill="#eef1f8"/><rect x="6.500" y="23.500" width="14" height="6" fill="#fff" stroke="#7f8fbc" stroke-width="1"/><rect x="8" y="24.800" width="11" height="3.200" fill="#5ea6e2"/><rect x="5.500" y="22.500" width="16" height="1.200" fill="#55618a"/><circle cx="22.600" cy="8.400" r="7.300" fill="url(#pr2a)" stroke="#5a9416" stroke-width="0.800"/><text x="22.600" y="12.300" text-anchor="middle" font-family="Liberation Sans,sans-serif" font-weight="700" font-size="11.500" fill="#33580a" stroke="#33580a" stroke-width="0.400">?</text></svg>
<span class="t b" style="top:968px;left:164px;font-size:14px;color:#0000ff;letter-spacing:0.32px;">IN NÓNG (F4)</span>
<svg style="left:275px;top:962px" width="31" height="31" viewBox="0 0 31 31" ><defs><linearGradient id="pr1b" x1="0" y1="0" x2="0" y2="1"><stop offset="0" stop-color="#f4f7fc"/><stop offset="0.55" stop-color="#dfe6f3"/><stop offset="1" stop-color="#b4c2de"/></linearGradient><linearGradient id="pr3b" x1="0" y1="0" x2="0" y2="1"><stop offset="0" stop-color="#7b87ab"/><stop offset="1" stop-color="#2f3a62"/></linearGradient><radialGradient id="pr2b" cx="0.4" cy="0.3" r="0.8"><stop offset="0" stop-color="#b9e356"/><stop offset="0.7" stop-color="#7cba26"/><stop offset="1" stop-color="#4f8c12"/></radialGradient></defs><rect x="6.500" y="3.700" width="11" height="11" fill="#eef1f8" stroke="#9aa8cc" stroke-width="1"/><rect x="0.500" y="12.500" width="26" height="15" rx="2.800" fill="url(#pr1b)" stroke="#7f8fbc" stroke-width="1"/><path d="M4.500 13 h18 v3.500 c0 1.800 -1.200 3 -3 3 h-12 c-1.800 0 -3 -1.200 -3 -3 z" fill="url(#pr3b)"/><rect x="6.500" y="13" width="11" height="1.800" fill="#eef1f8"/><rect x="6.500" y="23.500" width="14" height="6" fill="#fff" stroke="#7f8fbc" stroke-width="1"/><rect x="8" y="24.800" width="11" height="3.200" fill="#5ea6e2"/><rect x="5.500" y="22.500" width="16" height="1.200" fill="#55618a"/><circle cx="22.600" cy="8.400" r="7.300" fill="url(#pr2b)" stroke="#5a9416" stroke-width="0.800"/><text x="22.600" y="12.300" text-anchor="middle" font-family="Liberation Sans,sans-serif" font-weight="700" font-size="11.500" fill="#33580a" stroke="#33580a" stroke-width="0.400">?</text></svg>
<span class="t b" style="top:968px;left:309.5px;font-size:14px;color:#0000ff;letter-spacing:0.39px;">IN A5 (F5)</span>
<svg style="left:397px;top:962px" width="31" height="31" viewBox="0 0 31 31" ><defs><linearGradient id="pr1c" x1="0" y1="0" x2="0" y2="1"><stop offset="0" stop-color="#f4f7fc"/><stop offset="0.55" stop-color="#dfe6f3"/><stop offset="1" stop-color="#b4c2de"/></linearGradient><linearGradient id="pr3c" x1="0" y1="0" x2="0" y2="1"><stop offset="0" stop-color="#7b87ab"/><stop offset="1" stop-color="#2f3a62"/></linearGradient><radialGradient id="pr2c" cx="0.4" cy="0.3" r="0.8"><stop offset="0" stop-color="#b9e356"/><stop offset="0.7" stop-color="#7cba26"/><stop offset="1" stop-color="#4f8c12"/></radialGradient></defs><rect x="6.500" y="3.700" width="11" height="11" fill="#eef1f8" stroke="#9aa8cc" stroke-width="1"/><rect x="0.500" y="12.500" width="26" height="15" rx="2.800" fill="url(#pr1c)" stroke="#7f8fbc" stroke-width="1"/><path d="M4.500 13 h18 v3.500 c0 1.800 -1.200 3 -3 3 h-12 c-1.800 0 -3 -1.200 -3 -3 z" fill="url(#pr3c)"/><rect x="6.500" y="13" width="11" height="1.800" fill="#eef1f8"/><rect x="6.500" y="23.500" width="14" height="6" fill="#fff" stroke="#7f8fbc" stroke-width="1"/><rect x="8" y="24.800" width="11" height="3.200" fill="#5ea6e2"/><rect x="5.500" y="22.500" width="16" height="1.200" fill="#55618a"/><circle cx="22.600" cy="8.400" r="7.300" fill="url(#pr2c)" stroke="#5a9416" stroke-width="0.800"/><text x="22.600" y="12.300" text-anchor="middle" font-family="Liberation Sans,sans-serif" font-weight="700" font-size="11.500" fill="#33580a" stroke="#33580a" stroke-width="0.400">?</text></svg>
<span class="t b" style="top:968px;left:431.5px;font-size:14px;color:#0000ff;letter-spacing:0.39px;">IN A4 (F6)</span>
<div style="left:515px;top:959px;width:1px;height:38px;background:repeating-linear-gradient(180deg,#c8c8c8 0,#c8c8c8 2px,rgba(0,0,0,0) 2px,rgba(0,0,0,0) 4px) 0 0px"></div>
<svg style="left:530px;top:969px" width="14" height="15" viewBox="0 0 14 15" ><rect x="0.500" y="2.500" width="12" height="12" fill="#fff" stroke="#9a9a9a"/></svg>
<span class="t b" style="top:968px;left:544.5px;font-size:14px;color:#0000ff;letter-spacing:0.14px;">QUY CÁCH</span>
<svg style="left:636px;top:969px" width="14" height="15" viewBox="0 0 14 15" ><rect x="0.500" y="2.500" width="12" height="12" fill="#fff" stroke="#9a9a9a"/><path d="M2.500 8.500 L5.500 12.500 L12 0.800" fill="none" stroke="#000" stroke-width="1.500"/></svg>
<span class="t b" style="top:968px;left:650.5px;font-size:14px;color:#000;letter-spacing:0.4px;">XEM IN</span>
<svg style="left:718px;top:966px" width="25" height="24" viewBox="0 0 25 24" ><defs><linearGradient id="bx" x1="0" y1="0" x2="0" y2="1"><stop offset="0" stop-color="#ef8a7a"/><stop offset="0.5" stop-color="#d9483a"/><stop offset="1" stop-color="#a32418"/></linearGradient></defs><path d="M4.500 4.500 L20.500 19.500 M20.500 4.500 L4.500 19.500" stroke="#fbe0dc" stroke-width="7.500" stroke-linecap="round" fill="none"/><path d="M4.500 4.500 L20.500 19.500 M20.500 4.500 L4.500 19.500" stroke="url(#bx)" stroke-width="6" stroke-linecap="round" fill="none"/></svg>
<span class="t b" style="top:968px;left:751.5px;font-size:14px;color:#ff0000;letter-spacing:0.5px;">THOÁT</span>
<div style="left:0;top:1013px;width:1920px;height:1px;background-image:repeating-linear-gradient(90deg,#ababab 0,#ababab 3px,rgba(0,0,0,0) 3px,rgba(0,0,0,0) 6px)"></div>
<span class="t b" style="top:1019px;left:8px;font-size:11px;letter-spacing:0.06px;">Chào mừng: Administrator đến với phần mềm MekongSoft</span>
<span class="t" style="top:1019px;left:347px;font-size:11px;color:#b0b0b0;">|</span>
<span class="t b" style="top:1019px;left:363px;font-size:11px;letter-spacing:-0.15px;">Version: 4.2.0</span>
<span class="t" style="top:1019px;left:451px;font-size:11px;color:#b0b0b0;">|</span>
<span class="t b" style="top:1019px;left:465px;font-size:11px;color:#ff0000;letter-spacing:0.12px;">Ngày: 13/10/2023 1:46:56 CH</span>
<div style="left:1613px;top:1016px;width:1px;height:24px;background:repeating-linear-gradient(180deg,#b0b0b0 0,#b0b0b0 3px,rgba(0,0,0,0) 3px,rgba(0,0,0,0) 6px) 0 0px"></div>
<span class="t b" style="top:1019px;left:1624.5px;font-size:11px;letter-spacing:-0.03px;">@2023 MekongSoft. Thông tin hỗ trợ: 0901 000 508</span>
<span class="t b" style="top:221px;left:1350.5px;font-size:11px;color:#a6a6a6;letter-spacing:-0.14px;">DANH SÁCH PHIẾU</span>
<svg style="left:1871px;top:226px" width="7" height="8" shape-rendering="crispEdges"><path d="M1 0h5v1h-5zM1 1h1v1h-1zM3 1h3v1h-3zM1 2h1v1h-1zM3 2h3v1h-3zM1 3h1v1h-1zM3 3h3v1h-3zM1 4h1v1h-1zM3 4h3v1h-3zM0 5h7v1h-7zM3 6h1v1h-1zM3 7h1v1h-1z" fill="#000"/></svg>
<svg style="left:1893px;top:226px" width="9" height="7" shape-rendering="crispEdges"><path d="M0 0h3v1h-3zM6 0h3v1h-3zM1 1h3v1h-3zM5 1h3v1h-3zM2 2h5v1h-5zM3 3h3v1h-3zM2 4h5v1h-5zM1 5h3v1h-3zM5 5h3v1h-3zM0 6h3v1h-3zM6 6h3v1h-3z" fill="#000"/></svg>
<div style="left:1349px;top:241px;width:556px;height:1px;background:repeating-linear-gradient(90deg,#d0d0d0 0,#d0d0d0 3px,rgba(0,0,0,0) 3px,rgba(0,0,0,0) 6px) 0px 0"></div>
<span class="t" style="top:247px;left:1351.5px;letter-spacing:0.17px;">Từ ngày</span>
<span class="t" style="top:247px;left:1637.5px;">Đến ngày</span>
<div class="f" style="left:1350px;top:271px;width:283px;height:24px;"></div>
<span class="t" style="top:273px;left:1353.5px;letter-spacing:0.44px;">01/10/2023</span>
<svg style="left:1621px;top:281px" width="7" height="4" shape-rendering="crispEdges"><path d="M0 0h7v1h-7zM1 1h5v1h-5zM2 2h3v1h-3zM3 3h1v1h-1z"/></svg>
<div class="f" style="left:1637px;top:271px;width:268px;height:24px;"></div>
<span class="t" style="top:273px;left:1640.5px;letter-spacing:0.44px;">13/10/2023</span>
<svg style="left:1893px;top:281px" width="7" height="4" shape-rendering="crispEdges"><path d="M0 0h7v1h-7zM1 1h5v1h-5zM2 2h3v1h-3zM3 3h1v1h-1z"/></svg>
<span class="t" style="top:303px;left:1349.5px;letter-spacing:-0.06px;">Người lập</span>
<div class="f" style="left:1418px;top:300px;width:487px;height:24px;"></div>
<span class="t" style="top:302px;left:1422.5px;letter-spacing:-0.29px;">Administrator</span>
<svg style="left:1873px;top:310px" width="7" height="4" shape-rendering="crispEdges"><path d="M0 0h7v1h-7zM1 1h5v1h-5zM2 2h3v1h-3zM3 3h1v1h-1z"/></svg>
<svg style="left:1886px;top:304px" width="16" height="16" viewBox="0 0 16 16" ><path d="M10.600 2.300 C6 1.200 1.900 3.500 1.900 8.500 L0.100 8.500 L3.600 11.900 L7.100 8.400 L5.500 8.400 C5.500 5.500 7.500 3.200 10.600 2.300 Z" fill="#5db53a"/><path d="M10.600 2.300 C6 1.200 1.900 3.500 1.900 8.500 L0.100 8.500 L3.600 11.900 L7.100 8.400 L5.500 8.400 C5.500 5.500 7.500 3.200 10.600 2.300 Z" fill="#45b13c" transform="rotate(180 8 7.900)"/></svg>
<div style="left:1814px;top:329px;width:91px;height:24px;background:#fff;border:1px solid #ababab;"></div>
<svg style="left:1815px;top:330px" width="89" height="22" shape-rendering="crispEdges"><rect width="100%" height="100%" fill="url(#hp)"/></svg>
<svg style="left:1819px;top:333px" width="16" height="16" viewBox="0 0 16 16" ><circle cx="5.800" cy="5.800" r="4.300" fill="none" stroke="#2e2e2e" stroke-width="2"/><path d="M9 9 L13.500 13.500" stroke="#2a2a2a" stroke-width="2.800" stroke-linecap="round"/></svg>
<span class="t b" style="top:332px;left:1838.4px;font-size:14px;color:#0000ff;letter-spacing:-0.54px;">Tìm kiếm</span>
<div style="left:1350px;top:357px;width:555px;height:585px;background:#fff;border:1px solid #ababab;overflow:hidden"></div>
<div style="left:1351px;top:358px;width:553px;height:22px;background:#fff"></div>
<svg style="left:1351px;top:358px" width="21" height="22" shape-rendering="crispEdges"><rect width="100%" height="100%" fill="url(#hp)"/></svg>
<svg style="left:1373px;top:358px" width="90" height="22" shape-rendering="crispEdges"><rect width="100%" height="100%" fill="url(#hp)"/></svg>
<svg style="left:1464px;top:358px" width="102" height="22" shape-rendering="crispEdges"><rect width="100%" height="100%" fill="url(#hp)"/></svg>
<svg style="left:1567px;top:358px" width="74" height="22" shape-rendering="crispEdges"><rect width="100%" height="100%" fill="url(#hp)"/></svg>
<svg style="left:1642px;top:358px" width="74" height="22" shape-rendering="crispEdges"><rect width="100%" height="100%" fill="url(#hp)"/></svg>
<svg style="left:1717px;top:358px" width="74" height="22" shape-rendering="crispEdges"><rect width="100%" height="100%" fill="url(#hp)"/></svg>
<svg style="left:1792px;top:358px" width="74" height="22" shape-rendering="crispEdges"><rect width="100%" height="100%" fill="url(#hp)"/></svg>
<svg style="left:1867px;top:358px" width="37" height="22" shape-rendering="crispEdges"><rect width="100%" height="100%" fill="url(#hp)"/></svg>
<div style="left:1351px;top:380px;width:553px;height:1px;background:#ababab"></div>
<div style="left:1351px;top:381px;width:21px;height:140px;background:#fff"></div>
<svg style="left:1351px;top:381px" width="21" height="27" shape-rendering="crispEdges"><rect width="100%" height="100%" fill="url(#hp)"/></svg>
<svg style="left:1351px;top:410px" width="21" height="27" shape-rendering="crispEdges"><rect width="100%" height="100%" fill="url(#hp)"/></svg>
<svg style="left:1351px;top:438px" width="21" height="27" shape-rendering="crispEdges"><rect width="100%" height="100%" fill="url(#hp)"/></svg>
<svg style="left:1351px;top:466px" width="21" height="27" shape-rendering="crispEdges"><rect width="100%" height="100%" fill="url(#hp)"/></svg>
<svg style="left:1351px;top:494px" width="21" height="27" shape-rendering="crispEdges"><rect width="100%" height="100%" fill="url(#hp)"/></svg>
<div style="left:1351px;top:408px;width:22px;height:2px;background:#a9a9a9"></div>
<div style="left:1373px;top:408px;width:531px;height:2px;background:#b9b9b9"></div>
<div style="left:1373px;top:494px;width:531px;height:27px;background:#f4f4f4"></div>
<div style="left:1567px;top:494px;width:74px;height:27px;background:linear-gradient(90deg,#ffff00 0,#ffff30 50%,#ffffa8 100%)"></div>
<div style="left:1351px;top:437px;width:22px;height:1px;background:#ababab"></div>
<div style="left:1373px;top:437px;width:531px;height:1px;background:#d2d2d2"></div>
<div style="left:1351px;top:465px;width:22px;height:1px;background:#ababab"></div>
<div style="left:1373px;top:465px;width:531px;height:1px;background:#d2d2d2"></div>
<div style="left:1351px;top:493px;width:22px;height:1px;background:#ababab"></div>
<div style="left:1373px;top:493px;width:531px;height:1px;background:#d2d2d2"></div>
<div style="left:1351px;top:521px;width:22px;height:1px;background:#ababab"></div>
<div style="left:1373px;top:521px;width:531px;height:1px;background:#d2d2d2"></div>
<div style="left:1372px;top:358px;width:1px;height:22px;background:#ababab"></div>
<div style="left:1372px;top:381px;width:1px;height:141px;background:#ababab"></div>
<div style="left:1463px;top:358px;width:1px;height:22px;background:#ababab"></div>
<div style="left:1463px;top:381px;width:1px;height:141px;background:#d0d0d0"></div>
<div style="left:1566px;top:358px;width:1px;height:22px;background:#ababab"></div>
<div style="left:1566px;top:381px;width:1px;height:141px;background:#d0d0d0"></div>
<div style="left:1641px;top:358px;width:1px;height:22px;background:#ababab"></div>
<div style="left:1641px;top:381px;width:1px;height:141px;background:#d0d0d0"></div>
<div style="left:1716px;top:358px;width:1px;height:22px;background:#ababab"></div>
<div style="left:1716px;top:381px;width:1px;height:141px;background:#d0d0d0"></div>
<div style="left:1791px;top:358px;width:1px;height:22px;background:#ababab"></div>
<div style="left:1791px;top:381px;width:1px;height:141px;background:#d0d0d0"></div>
<div style="left:1866px;top:358px;width:1px;height:22px;background:#ababab"></div>
<div style="left:1866px;top:381px;width:1px;height:141px;background:#d0d0d0"></div>
<span class="t b" style="top:359px;left:1376.5px;font-size:13px;letter-spacing:-0.21px;">Ngày lập</span>
<span class="t b" style="top:359px;left:1467.5px;font-size:13px;letter-spacing:-0.29px;">Mã phiếu</span>
<span class="t b" style="top:359px;left:1571.5px;font-size:13px;letter-spacing:0.12px;">Tổng tiền</span>
<span class="t b" style="top:359px;left:1646.5px;font-size:13px;letter-spacing:-0.58px;">Ghi chú</span>
<span class="t b" style="top:359px;left:1720.5px;font-size:13px;letter-spacing:-0.38px;">Người lập</span>
<span class="t b" style="top:359px;left:1795.5px;font-size:13px;letter-spacing:-0.14px;">Kho xuất</span>
<div style="left:1869px;top:359px;width:35px;height:20px;overflow:hidden"><span class="t b" style="top:0;left:2.5px;font-size:13px;">Kho nhận</span></div>
<svg style="left:1356px;top:391px" width="5" height="7" shape-rendering="crispEdges"><path d="M1 0h3v1h-3zM0 1h1v1h-1zM4 1h1v1h-1zM0 2h5v1h-5zM1 3h3v1h-3zM2 4h1v1h-1zM2 5h1v1h-1zM2 6h1v1h-1z" fill="#000"/></svg>
<svg style="left:1381px;top:393px" width="9" height="3" shape-rendering="crispEdges"><path d="M0 0h9v1h-9zM0 2h9v1h-9z" fill="#6e6e6e"/></svg>
<svg style="left:1469px;top:389px" width="15" height="11" shape-rendering="crispEdges"><path d="M0 3h3v1h-3zM0 4h1v1h-1zM2 4h1v1h-1zM0 5h3v1h-3zM0 6h1v1h-1zM2 6h1v1h-1zM0 7h1v1h-1zM2 7h1v1h-1zM12 3h3v1h-3zM12 4h1v1h-1zM12 5h1v1h-1zM12 6h1v1h-1zM12 7h3v1h-3z" fill="#6e6e6e"/><path d="M5 0h5v1h-5zM4 1h7v1h-7zM4 2h7v1h-7zM4 3h7v1h-7zM4 4h7v1h-7zM4 5h7v1h-7zM4 6h7v1h-7zM4 7h7v1h-7zM4 8h7v1h-7zM4 9h7v1h-7zM5 10h5v1h-5z" fill="#0a9c1c"/><path d="M6 3h3v1h-3zM6 4h1v1h-1zM8 4h1v1h-1zM6 5h3v1h-3zM6 6h1v1h-1zM8 6h1v1h-1zM6 7h3v1h-3z" fill="#fff"/></svg>
<svg style="left:1575px;top:393px" width="9" height="3" shape-rendering="crispEdges"><path d="M0 0h9v1h-9zM0 2h9v1h-9z" fill="#6e6e6e"/></svg>
<svg style="left:1647px;top:389px" width="15" height="11" shape-rendering="crispEdges"><path d="M0 3h3v1h-3zM0 4h1v1h-1zM2 4h1v1h-1zM0 5h3v1h-3zM0 6h1v1h-1zM2 6h1v1h-1zM0 7h1v1h-1zM2 7h1v1h-1zM12 3h3v1h-3zM12 4h1v1h-1zM12 5h1v1h-1zM12 6h1v1h-1zM12 7h3v1h-3z" fill="#6e6e6e"/><path d="M5 0h5v1h-5zM4 1h7v1h-7zM4 2h7v1h-7zM4 3h7v1h-7zM4 4h7v1h-7zM4 5h7v1h-7zM4 6h7v1h-7zM4 7h7v1h-7zM4 8h7v1h-7zM4 9h7v1h-7zM5 10h5v1h-5z" fill="#0a9c1c"/><path d="M6 3h3v1h-3zM6 4h1v1h-1zM8 4h1v1h-1zM6 5h3v1h-3zM6 6h1v1h-1zM8 6h1v1h-1zM6 7h3v1h-3z" fill="#fff"/></svg>
<svg style="left:1722px;top:389px" width="15" height="11" shape-rendering="crispEdges"><path d="M0 3h3v1h-3zM0 4h1v1h-1zM2 4h1v1h-1zM0 5h3v1h-3zM0 6h1v1h-1zM2 6h1v1h-1zM0 7h1v1h-1zM2 7h1v1h-1zM12 3h3v1h-3zM12 4h1v1h-1zM12 5h1v1h-1zM12 6h1v1h-1zM12 7h3v1h-3z" fill="#6e6e6e"/><path d="M5 0h5v1h-5zM4 1h7v1h-7zM4 2h7v1h-7zM4 3h7v1h-7zM4 4h7v1h-7zM4 5h7v1h-7zM4 6h7v1h-7zM4 7h7v1h-7zM4 8h7v1h-7zM4 9h7v1h-7zM5 10h5v1h-5z" fill="#0a9c1c"/><path d="M6 3h3v1h-3zM6 4h1v1h-1zM8 4h1v1h-1zM6 5h3v1h-3zM6 6h1v1h-1zM8 6h1v1h-1zM6 7h3v1h-3z" fill="#fff"/></svg>
<svg style="left:1797px;top:389px" width="15" height="11" shape-rendering="crispEdges"><path d="M0 3h3v1h-3zM0 4h1v1h-1zM2 4h1v1h-1zM0 5h3v1h-3zM0 6h1v1h-1zM2 6h1v1h-1zM0 7h1v1h-1zM2 7h1v1h-1zM12 3h3v1h-3zM12 4h1v1h-1zM12 5h1v1h-1zM12 6h1v1h-1zM12 7h3v1h-3z" fill="#6e6e6e"/><path d="M5 0h5v1h-5zM4 1h7v1h-7zM4 2h7v1h-7zM4 3h7v1h-7zM4 4h7v1h-7zM4 5h7v1h-7zM4 6h7v1h-7zM4 7h7v1h-7zM4 8h7v1h-7zM4 9h7v1h-7zM5 10h5v1h-5z" fill="#0a9c1c"/><path d="M6 3h3v1h-3zM6 4h1v1h-1zM8 4h1v1h-1zM6 5h3v1h-3zM6 6h1v1h-1zM8 6h1v1h-1zM6 7h3v1h-3z" fill="#fff"/></svg>
<svg style="left:1872px;top:389px" width="15" height="11" shape-rendering="crispEdges"><path d="M0 3h3v1h-3zM0 4h1v1h-1zM2 4h1v1h-1zM0 5h3v1h-3zM0 6h1v1h-1zM2 6h1v1h-1zM0 7h1v1h-1zM2 7h1v1h-1zM12 3h3v1h-3zM12 4h1v1h-1zM12 5h1v1h-1zM12 6h1v1h-1zM12 7h3v1h-3z" fill="#6e6e6e"/><path d="M5 0h5v1h-5zM4 1h7v1h-7zM4 2h7v1h-7zM4 3h7v1h-7zM4 4h7v1h-7zM4 5h7v1h-7zM4 6h7v1h-7zM4 7h7v1h-7zM4 8h7v1h-7zM4 9h7v1h-7zM5 10h5v1h-5z" fill="#0a9c1c"/><path d="M6 3h3v1h-3zM6 4h1v1h-1zM8 4h1v1h-1zM6 5h3v1h-3zM6 6h1v1h-1zM8 6h1v1h-1zM6 7h3v1h-3z" fill="#fff"/></svg>
<span class="t" style="top:413px;left:1377.5px;letter-spacing:0.39px;">13/10/2023</span>
<span class="t" style="top:413px;left:1467.5px;letter-spacing:0.33px;">NCK00005-1...</span>
<span class="t" style="top:413px;left:1593.5px;letter-spacing:0.4px;">30,000</span>
<span class="t" style="top:413px;left:1721.5px;letter-spacing:-0.2px;">Administ...</span>
<span class="t" style="top:413px;left:1795.5px;letter-spacing:0.19px;">Kho chính</span>
<div style="left:1869px;top:413px;width:35px;height:20px;overflow:hidden"><span class="t" style="top:0;left:2.5px;">Kho Phụ 1</span></div>
<span class="t" style="top:441px;left:1377.5px;letter-spacing:0.39px;">13/10/2023</span>
<span class="t" style="top:441px;left:1467.5px;letter-spacing:0.33px;">NCK00004-1...</span>
<span class="t" style="top:441px;left:1586px;letter-spacing:0.25px;">120,000</span>
<span class="t" style="top:441px;left:1721.5px;letter-spacing:-0.2px;">Administ...</span>
<span class="t" style="top:441px;left:1795.5px;letter-spacing:0.19px;">Kho chính</span>
<div style="left:1869px;top:441px;width:35px;height:20px;overflow:hidden"><span class="t" style="top:0;left:2.5px;">Kho Phụ 1</span></div>
<span class="t" style="top:469px;left:1377.5px;letter-spacing:0.39px;">13/10/2023</span>
<span class="t" style="top:469px;left:1467.5px;letter-spacing:0.33px;">NCK00003-1...</span>
<span class="t" style="top:469px;left:1586px;letter-spacing:0.25px;">100,000</span>
<span class="t" style="top:469px;left:1721.5px;letter-spacing:-0.2px;">Administ...</span>
<span class="t" style="top:469px;left:1795.5px;letter-spacing:0.19px;">Kho chính</span>
<div style="left:1869px;top:469px;width:35px;height:20px;overflow:hidden"><span class="t" style="top:0;left:2.5px;">Kho Phụ 1</span></div>
<span class="t" style="top:497px;left:1377.5px;letter-spacing:0.39px;">13/10/2023</span>
<span class="t" style="top:497px;left:1467.5px;letter-spacing:0.33px;">NCK00002-1...</span>
<span class="t b" style="top:497px;left:1572px;font-size:14px;color:#ff0000;letter-spacing:-0.17px;">3,848,0...</span>
<span class="t" style="top:497px;left:1721.5px;letter-spacing:-0.2px;">Administ...</span>
<span class="t" style="top:497px;left:1795.5px;letter-spacing:0.19px;">Kho chính</span>
<div style="left:1869px;top:497px;width:35px;height:20px;overflow:hidden"><span class="t" style="top:0;left:2.5px;">Kho Phụ 1</span></div>
<svg style="left:1357px;top:504px" width="4" height="7" shape-rendering="crispEdges"><path d="M0 0h1v1h-1zM0 1h2v1h-2zM0 2h3v1h-3zM0 3h4v1h-4zM0 4h3v1h-3zM0 5h2v1h-2zM0 6h1v1h-1z" fill="#000"/></svg>
<div style="left:1351px;top:890px;width:553px;height:1px;background:#ababab"></div>
<div style="left:1351px;top:891px;width:553px;height:33px;background:#fff;"></div>
<svg style="left:1351px;top:891px" width="553" height="33" shape-rendering="crispEdges"><rect width="100%" height="100%" fill="url(#hp)"/></svg>
<div style="left:1351px;top:924px;width:553px;height:17px;background:#fff"></div>
<div style="left:1351px;top:924px;width:551px;height:1px;background:repeating-linear-gradient(90deg,#d4d4d4 0,#d4d4d4 3px,rgba(0,0,0,0) 3px,rgba(0,0,0,0) 6px) 3px 0"></div>
<div style="left:1368px;top:924px;width:483px;height:16px;background:#fff;border:1px solid #ababab;"></div>
<svg style="left:1369px;top:925px" width="481" height="14" shape-rendering="crispEdges"><rect width="100%" height="100%" fill="url(#hp)"/></svg>
<svg style="left:1357px;top:929px" width="4" height="7" shape-rendering="crispEdges"><path d="M3 0h1v1h-1zM2 1h2v1h-2zM1 2h3v1h-3zM0 3h4v1h-4zM1 4h3v1h-3zM2 5h2v1h-2zM3 6h1v1h-1z" fill="#000"/></svg>
<svg style="left:1894px;top:929px" width="4" height="7" shape-rendering="crispEdges"><path d="M0 0h1v1h-1zM0 1h2v1h-2zM0 2h3v1h-3zM0 3h4v1h-4zM0 4h3v1h-3zM0 5h2v1h-2zM0 6h1v1h-1z" fill="#000"/></svg>
<div style="left:1348px;top:218px;width:559px;height:6px;background:linear-gradient(180deg,#cfcfcf 0,#e9e9e9 45%,#fff 100%)"></div>
<div style="left:1348px;top:218px;width:2px;height:728px;background:linear-gradient(90deg,#dadada 0,#efefef 100%)"></div>
<div style="left:1344px;top:949px;width:569px;height:8px;background:linear-gradient(180deg,#d0d0d0 0,#dedede 30%,#fff 100%);-webkit-mask-image:linear-gradient(90deg,rgba(0,0,0,0) 0,#000 6px,#000 calc(100% - 6px),rgba(0,0,0,0) 100%);mask-image:linear-gradient(90deg,rgba(0,0,0,0) 0,#000 6px,#000 calc(100% - 6px),rgba(0,0,0,0) 100%)"></div>
<div style="left:1904px;top:218px;width:3px;height:728px;background:linear-gradient(90deg,rgba(255,255,255,0) 0,rgba(216,216,216,0.9) 100%)"></div>
<div style="left:1343px;top:215px;width:3px;height:734px;background:#989a9a"></div>
<div style="left:1909px;top:215px;width:3px;height:734px;background:#989a9a"></div>
<div style="left:1346px;top:216px;width:563px;height:2px;background:#989a9a"></div>
<div style="left:1343px;top:948px;width:569px;height:1px;background:#989a9a"></div>
<div style="left:1346px;top:214px;width:563px;height:734px;border:2px solid #fb3535"></div>
<svg style="left:1395px;top:525px" width="320" height="135" viewBox="1395 525 320 135"><defs><filter id="cs" x="-10%" y="-10%" width="130%" height="140%"><feDropShadow dx="1.500" dy="3" stdDeviation="1.800" flood-color="#000" flood-opacity="0.500"/></filter></defs><g filter="url(#cs)"><path d="M1411 535.300 L1495 567.600" stroke="#000" stroke-width="1.700" fill="none"/><path d="M1406.500 533.500 L1413.300 532.800 L1411 538.500 Z" fill="#000"/><rect x="1493" y="567.500" width="203.500" height="77.500" rx="4.500" fill="#fff" stroke="#000" stroke-width="1.800"/></g></svg>
<span class="t" style="top:595px;left:1507.12px;font-size:17.33px;color:#141414;font-family:'Liberation Sans',sans-serif;transform-origin:0 0;transform:scaleX(0.8789);">1.Phiếu nhập chuyễn kho</span>
<svg style="left:1422px;top:573px" width="13" height="19" viewBox="0 0 13 19" ><path d="M0.700 0.700 V15.500 L4.300 12 L6.800 17.800 L9.200 16.800 L6.700 11.200 H11.500 Z" fill="#fff" stroke="#000" stroke-width="1" stroke-linejoin="miter"/></svg>
</body></html>
